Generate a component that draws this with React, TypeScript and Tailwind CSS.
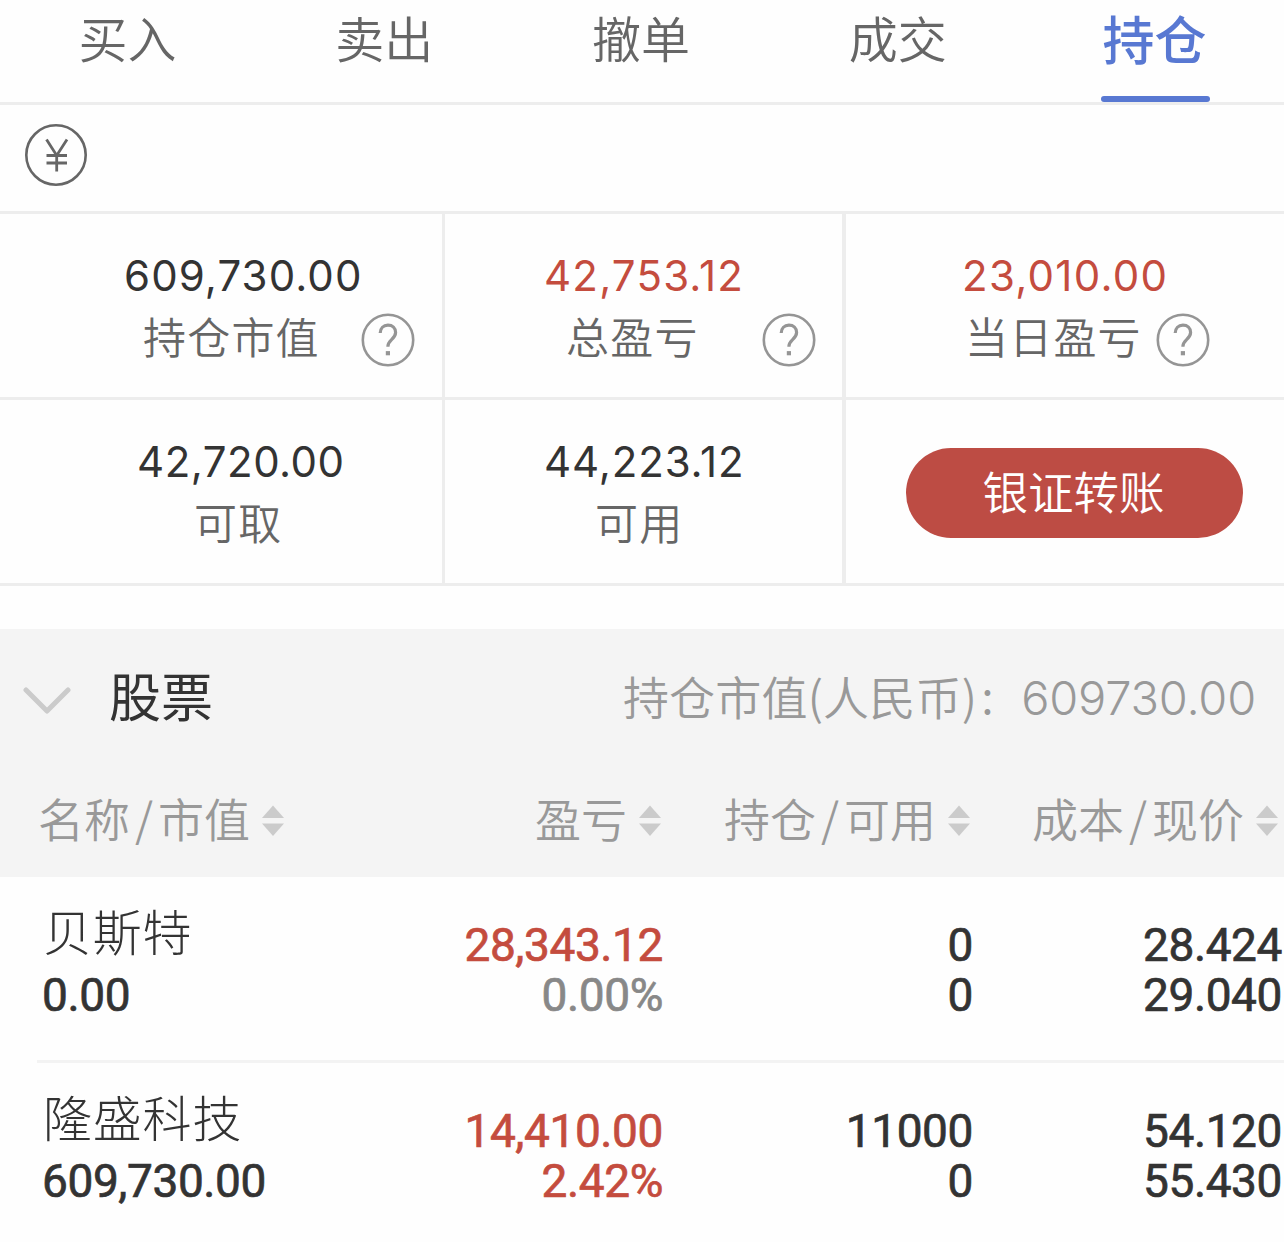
import clsx from "clsx";

const tabs = ["买入", "卖出", "撤单", "成交", "持仓"];

const holdings = [
    {
        name: "贝斯特",
        value: "0.00",
        profit: "28,343.12",
        rate: "0.00%",
        flat: true,
        amount: "0",
        available: "0",
        cost: "28.424",
        price: "29.040",
    },
    {
        name: "隆盛科技",
        value: "609,730.00",
        profit: "14,410.00",
        rate: "2.42%",
        flat: false,
        amount: "11000",
        available: "0",
        cost: "54.120",
        price: "55.430",
    },
];

const HelpIcon = () => (
    <svg
        viewBox="0 0 54 54"
        className="mt-[7px] h-[54px] w-[54px] shrink-0"
        fill="none"
        stroke="#959595"
        aria-hidden="true"
    >
        <circle cx="27" cy="27" r="25.2" strokeWidth="2.6" />
        <path
            d="M19.2 20c.2-4.6 3.2-7.800 7.700-7.800 4.500 0 7.700 3 7.700 7.300 0 3.100-1.400 4.700-4 7.100-2.700 2.500-3.700 3.900-3.700 7.100"
            strokeWidth="3.2"
        />
        <path d="M24.800 40.200h4.200" strokeWidth="4.200" />
    </svg>
);

const YuanIcon = () => (
    <svg
        viewBox="0 0 62 62"
        className="h-[62px] w-[62px]"
        fill="none"
        stroke="#666"
        aria-hidden="true"
    >
        <circle cx="31" cy="31" r="29.700" strokeWidth="2.600" />
        <path
            d="M21.500 15.500 31.700 31.500 42 15.500M31.700 31v16.500M21.500 31.500h20.500M21.500 39h20.500"
            strokeWidth="2.800"
        />
    </svg>
);

const SortIcon = () => (
    <svg viewBox="0 0 22 32" className="h-8 w-[22px] shrink-0" fill="#cbcbcb" aria-hidden="true">
        <path d="M11 0.500 22 13H0z" />
        <path d="M0 18.500h22L11 31z" />
    </svg>
);

const Amount = ({ value, className }: { value: string; className?: string }) => (
    <p
        className={clsx(
            "whitespace-nowrap font-['Inter',sans-serif] text-[42px] leading-[60px] font-normal",
            className
        )}
    >
        {value}
    </p>
);

const Label = ({ text, className }: { text: string; className?: string }) => (
    <span
        className={clsx(
            "whitespace-nowrap text-[43px] leading-[58px] tracking-[1.200px] text-[#666]",
            className
        )}
    >
        {text}
    </span>
);

const HeadCell = ({ parts, className }: { parts: string[]; className?: string }) => (
    <div className={clsx("flex items-center whitespace-nowrap", className)}>
        {parts.map((part, i) => (
            <span key={part} className="flex">
                {i > 0 && <span className="w-[28px] text-center">/</span>}
                <span>{part}</span>
            </span>
        ))}
        <span className="mt-2 ml-3">
            <SortIcon />
        </span>
    </div>
);

const Summary = () => (
    <section className="grid grid-cols-[445px_401px_438px] grid-rows-[186px_186px] border-t-3 border-[#ededed] text-[#333]">
        <div className="border-r-3 border-b-3 border-[#ededed] pt-8">
            <Amount value="609,730.00" className="pl-[124px] tracking-[1.100px]" />
            <div className="flex items-start pl-[143px]">
                <Label text="持仓市值" className="w-[218px]" />
                <HelpIcon />
            </div>
        </div>
        <div className="border-r-4 border-b-3 border-[#ededed] pt-8">
            <Amount value="42,753.12" className="pl-[99px] tracking-[1.200px] text-[#c44c3e]" />
            <div className="flex items-start pl-[121px]">
                <Label text="总盈亏" className="w-[196px]" />
                <HelpIcon />
            </div>
        </div>
        <div className="border-b-3 border-[#ededed] pt-8">
            <Amount value="23,010.00" className="pl-[116px] tracking-[1.300px] text-[#c44c3e]" />
            <div className="flex items-start pl-[119px]">
                <Label text="当日盈亏" className="w-[191px]" />
                <HelpIcon />
            </div>
        </div>
        <div className="border-r-3 border-b-3 border-[#ededed] pt-8">
            <Amount value="42,720.00" className="pl-[137px] tracking-[0.500px]" />
            <div className="flex items-start pl-[194px]">
                <Label text="可取" />
            </div>
        </div>
        <div className="border-r-4 border-b-3 border-[#ededed] pt-8">
            <Amount value="44,223.12" className="pl-[99px] tracking-[0.900px]" />
            <div className="flex items-start pl-[150px]">
                <Label text="可用" />
            </div>
        </div>
        <div className="border-b-3 border-[#ededed] pt-12 pl-[60px]">
            <button className="block h-[90px] w-[337px] rounded-full bg-[#bd4c44] pr-[2px] pb-1.5 text-[45.500px] leading-[84px] text-white">
                银证转账
            </button>
        </div>
    </section>
);

export default function App() {
    return (
        <main className="h-[1242px] w-[1284px] overflow-hidden bg-[#fefefe] font-['Noto_Sans_CJK_SC',sans-serif] font-[350]">
            <nav className="grid h-[105px] grid-cols-5 border-b-3 border-[#ededed]">
                {tabs.map((tab) => {
                    const active = tab === "持仓";
                    return (
                        <button
                            key={tab}
                            className={clsx(
                                "flex flex-col items-center justify-between",
                                active
                                    ? "text-[52px] font-medium text-[#5878d2]"
                                    : "pr-[2px] text-[49px] text-[#666]"
                            )}
                        >
                            <span className={active ? "pr-[2px] leading-[75px]" : "leading-[73px]"}>{tab}</span>
                            {active && <span className="h-[6px] w-[109px] rounded-full bg-[#5878d2]" />}
                        </button>
                    );
                })}
            </nav>

            <div className="flex h-[106px] items-center pb-1.5 pl-[25px]">
                <YuanIcon />
            </div>

            <Summary />

            <section className="mt-[43px] h-[248px] bg-[#f4f4f4]">
                <div className="flex h-[138px] items-center pr-7 pl-[23px]">
                    <svg
                        viewBox="0 0 48 28"
                        className="mt-1.5 h-7 w-12"
                        fill="none"
                        stroke="#cbcbcb"
                        strokeWidth="5"
                        strokeLinecap="round"
                        strokeLinejoin="round"
                        aria-hidden="true"
                    >
                        <path d="M3 3l21 21L45 3" />
                    </svg>
                    <h2 className="ml-[38px] pb-1.5 text-[52px] leading-none font-normal text-[#333]">股票</h2>
                    <div className="ml-auto flex items-center text-[46px] leading-[60px] whitespace-nowrap text-[#999]">
                        <span className="pb-1.5 tracking-[0.200px]">持仓市值(人民币)</span>
                        <span className="w-[44px] pb-2 pl-1">:</span>
                        <span className="font-['Inter',sans-serif] text-[47px] font-light tracking-[-0.200px]">
                            609730.00
                        </span>
                    </div>
                </div>
                <div className="grid h-[110px] grid-cols-[400px_263px_310px_309px] pb-2.5 text-[46px] leading-[60px] text-[#999]">
                    <HeadCell parts={["名称", "市值"]} className="pl-[38px]" />
                    <HeadCell parts={["盈亏"]} className="justify-end pr-[2px]" />
                    <HeadCell parts={["持仓", "可用"]} className="justify-end pr-[3px]" />
                    <HeadCell parts={["成本", "现价"]} className="justify-end pr-1" />
                </div>
            </section>

            <ul className="font-['Roboto',sans-serif] text-[46px] leading-[50px] font-normal tracking-[-0.400px] text-[#333]">
                {holdings.map((stock) => (
                    <li key={stock.name} className="h-[186px]">
                        <div className="grid h-[183px] grid-cols-[400px_263px_310px_309px] pt-[43px] [-webkit-text-stroke:0.7px]">
                            <div className="-mt-[15px] pl-[42px]">
                                <p className="mb-[8px] h-[57px] pl-px font-['Noto_Sans_CJK_SC',sans-serif] text-[49px] leading-[50px] font-light tracking-[0.800px] [-webkit-text-stroke:0]">
                                    {stock.name}
                                </p>
                                <p>{stock.value}</p>
                            </div>
                            <div className="text-right text-[#c44c3e]">
                                <p>{stock.profit}</p>
                                <p className={clsx(stock.flat && "text-[#888]")}>{stock.rate}</p>
                            </div>
                            <div className="text-right">
                                <p>{stock.amount}</p>
                                <p>{stock.available}</p>
                            </div>
                            <div className="text-right">
                                <p>{stock.cost}</p>
                                <p>{stock.price}</p>
                            </div>
                        </div>
                        <div className="ml-[37px] h-[3px] bg-[#f3f3f3]" />
                    </li>
                ))}
            </ul>
        </main>
    );
}
